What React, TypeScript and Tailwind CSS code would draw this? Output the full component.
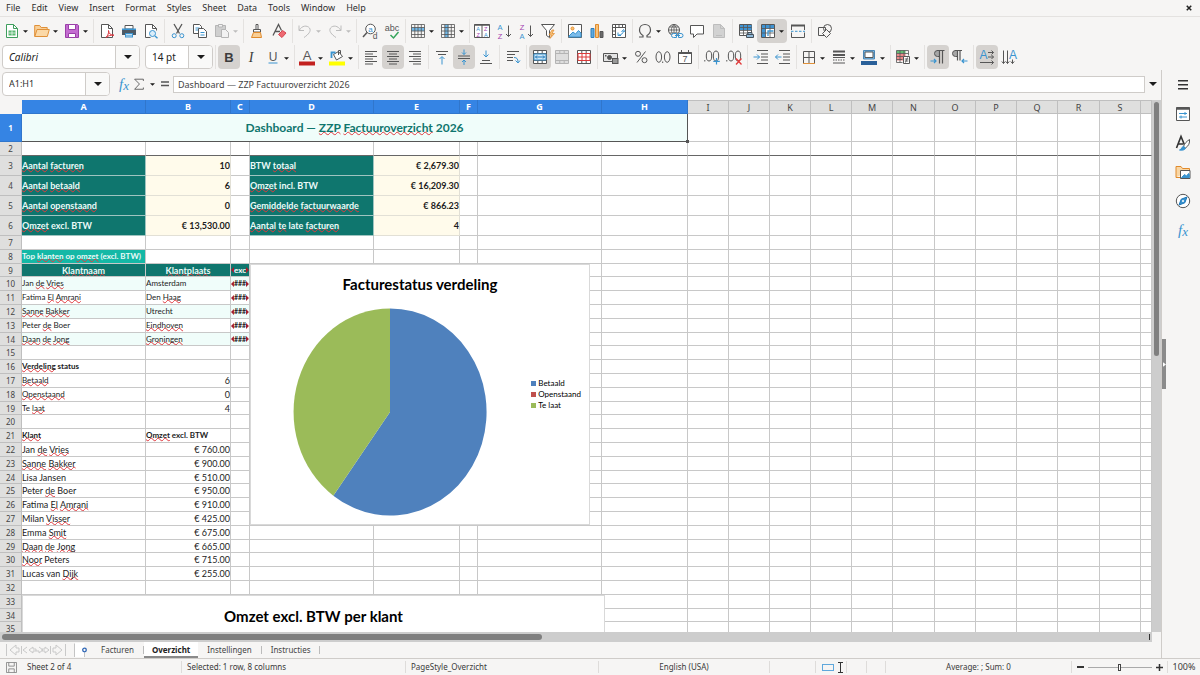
import React from "react";

const INK = "#565656";
const BLUE = "#3a94d0";

const Svg = ({ children, w = 16 }: { children: React.ReactNode; w?: number }) => (
  <svg viewBox="0 0 16 16" width={w} height={w} fill="none" stroke={INK} strokeWidth="1" aria-hidden="true" className="shrink-0 overflow-visible">
    {children}
  </svg>
);

const Letter = ({ x, y, s, fill = INK, bold, children }: { x: number; y: number; s: number; fill?: string; bold?: boolean; children: string }) => (
  <text x={x} y={y} fontSize={s} fill={fill} stroke="none" textAnchor="middle" fontFamily="Liberation Sans, sans-serif" fontWeight={bold ? 700 : 400}>
    {children}
  </text>
);

const Grid = ({ stroke = INK }: { stroke?: string }) => (
  <path stroke={stroke} d="M1.5 1.5h13v13h-13zM1.5 4.5h13M1.5 8h13M1.5 11.5h13M4.8 1.5v13M8 1.5v13M11.3 1.5v13" strokeWidth=".8" />
);

const icons: Record<string, React.ReactNode> = {
  new: (
    <>
      <path stroke="#3f9e5d" fill="#fff" d="M2.5 1.5h7l4 4v9h-11z" />
      <path stroke="#3f9e5d" d="M9.5 1.5v4h4" />
      <path stroke="none" fill="#5bb873" d="M4.5 7.5h7v5h-7z" />
      <path stroke="#fff" strokeWidth=".7" d="M4.5 10h7M8 7.5v5" />
    </>
  ),
  open: (
    <>
      <path stroke="#e09139" fill="#f9cf96" d="M.7 13.5V2.5h5l1.5 2h6v2.5" />
      <path stroke="#e09139" fill="#fbd9a8" d="M.8 13.5 3 6.5h12.3l-2 7z" />
    </>
  ),
  save: (
    <>
      <path stroke="#9a3fa8" fill="#c46cd1" d="M1.5 1.5h12l1 1v12h-13z" />
      <path stroke="#9a3fa8" fill="#fff" d="M4.5 1.5h7v5h-7zM4.5 10.5h7v4h-7z" />
    </>
  ),
  pdf: (
    <>
      <path fill="#fff" d="M2.5 1.5h7l4 4v9h-11z" />
      <path d="M9.5 1.5v4h4" />
      <path stroke="#d9363e" d="M7 14.5c2-2 3-5 2.5-7 .5 3.5 2 4.5 5.500 4.700-3-.2-6 .3-8 2.300z" />
    </>
  ),
  print: (
    <>
      <path stroke="none" fill="#4d5a66" d="M1 6h14v6H1z" />
      <path fill="#fff" d="M4 2.5h8V6H4z" />
      <path stroke="none" fill={BLUE} d="M1 5.5h14v1.5H1zM4 10h8v4.5H4z" />
      <path stroke="#fff" strokeWidth=".7" d="M5 11.5h6M5 13h6" />
    </>
  ),
  preview: (
    <>
      <path fill="#fff" d="M2.5 14.5v-13h7l4 4v2M2.5 14.5h5" />
      <path d="M9.5 1.5v4h4" />
      <circle cx="9.5" cy="10.5" r="3" stroke={BLUE} fill="#dceefa" />
      <path stroke={BLUE} strokeWidth="1.4" d="m12 13 2.5 2.3" />
    </>
  ),
  cut: (
    <>
      <path strokeWidth="1.3" d="m4 1 5.5 9.5M12 1 6.5 10.5" />
      <circle cx="4.2" cy="12.7" r="2" stroke={BLUE} />
      <circle cx="11.8" cy="12.7" r="2" stroke={BLUE} />
    </>
  ),
  copy: (
    <>
      <path fill="#fff" d="M1.5 1.5h6l2 2v7h-8z" />
      <path stroke={BLUE} d="M3.5 5h4M3.5 7h3" />
      <path fill="#fff" d="M6.5 5.5h5l3 3v6h-8z" />
      <path stroke={BLUE} d="M8.5 9.5h4M8.5 12h4" />
    </>
  ),
  paste: (
    <>
      <path stroke="#b5b5b5" fill="#cfcfcf" d="M1.5 2.5h10v11h-10z" />
      <path stroke="#b5b5b5" fill="#f2f2f2" d="M4.5 1.5h4v2.5h-4zM7.5 6.5h4l3 3v5h-7z" />
    </>
  ),
  brush: (
    <>
      <path fill="#fff" d="M7 1.5h2v5H7zM4.5 6.5h7v2.5h-7z" />
      <path stroke="#e08a2c" fill="#f9cf96" d="M4.5 9.5h7l1 5h-10z" />
    </>
  ),
  clear: (
    <>
      <path strokeWidth="1.3" d="M2 12.5 7.5 1.5l3 6M4 8.5h5" />
      <path stroke="#d64550" fill="#ee6a72" d="m7.5 11.5 4-4 3.5 2.5-4 4.5z" />
    </>
  ),
  undo: <path stroke="#bcbcbc" d="M2 2.5v5h5M2.3 7.2C5 2.5 10 2 12.5 5c2 3-1 6.5-5.5 9.5" />,
  redo: <path stroke="#bcbcbc" d="M14 2.5v5H9M13.7 7.2C11 2.5 6 2 3.5 5c-2 3 1 6.5 5.5 9.5" />,
  find: (
    <>
      <circle cx="8.5" cy="6" r="4.8" fill="#fff" />
      <path strokeWidth="1.5" d="m5 9.5-4 4.5" />
      <Letter x={8.5} y={8.5} s={8} fill={BLUE}>a</Letter>
      <Letter x={13} y={15.5} s={8.5}>d</Letter>
    </>
  ),
  spell: (
    <>
      <Letter x={8} y={8} s={9}>abc</Letter>
      <path stroke="#35a55b" strokeWidth="1.5" d="m6.500 12 3 3 5-6" />
    </>
  ),
  rows: (
    <>
      <path stroke="none" fill="#72b9e8" d="M1.5 4.5h13V8h-13z" />
      <Grid />
    </>
  ),
  cols: (
    <>
      <path stroke="none" fill="#72b9e8" d="M4.8 1.5H8.5v13H4.8z" />
      <Grid />
    </>
  ),
  sort: (
    <>
      <path fill="#fff" d="M.5 1.5h15v13H.5zM8 1.5v13" />
      <path strokeWidth="1.5" d="M.5 2h15" />
      <Letter x={4.2} y={7.8} s={5.5} fill={BLUE}>A</Letter>
      <Letter x={4.2} y={14} s={5.5} fill="#a33fb0">Z</Letter>
      <Letter x={11.8} y={7.8} s={5.5} fill="#a33fb0">Z</Letter>
      <Letter x={11.8} y={14} s={5.5} fill={BLUE}>A</Letter>
    </>
  ),
  asc: (
    <>
      <Letter x={4} y={7} s={7.5} fill={BLUE}>A</Letter>
      <Letter x={4} y={15.5} s={7.5} fill="#a33fb0">Z</Letter>
      <path d="M12.5 2.5v11M10 11l2.5 2.5L15 11" />
    </>
  ),
  desc: (
    <>
      <Letter x={4} y={7} s={7.5} fill="#a33fb0">Z</Letter>
      <Letter x={4} y={15.5} s={7.5} fill={BLUE}>A</Letter>
      <path d="M12.5 2.5v11M10 11l2.5 2.5L15 11" />
    </>
  ),
  filter: (
    <>
      <path fill="#fff" d="M1.5 1.5h13L9.5 7.500v7l-3-2v-5z" />
      <path stroke="#e08a2c" fill="#f7c27b" strokeWidth=".7" d="m12 7-3 5h2.5L10 15.500l4.5-5H12L14 7z" />
    </>
  ),
  image: (
    <>
      <path fill="#fff" d="M1.5 1.5h13v13h-13z" />
      <path stroke={BLUE} fill="#7cbcea" d="m2 13 4-4 2.5 2 3-3.5L14 10v4H2z" />
      <circle cx="5.5" cy="5.5" r="1.5" stroke="#e8912d" fill="#f7c27b" />
    </>
  ),
  chart: (
    <>
      <path stroke="#2f7fbd" fill="#5ea9dd" d="M2 5.5h3v9H2z" />
      <path stroke="#e08a2c" fill="#f7c27b" d="M6.5 1.5h3v13h-3z" />
      <path fill="#6b6b6b" d="M11 8.5h3v6h-3z" />
    </>
  ),
  pivot: (
    <>
      <path fill="#fff" d="M1.5 1.5h13v13h-13zM1.5 4.5h13M4.5 1.5v13M8 1.5v3M11.5 1.5v3M1.5 8h3M1.5 11.5h3" />
      <path stroke={BLUE} d="M7 9.5v3h3M7.5 12c3 0 4.5-1.5 5-4M10.5 9l2-2.5L14 9" />
    </>
  ),
  omega: <path strokeWidth="1.2" d="M2 14h4v-1.5C3.5 11 2.5 9 2.5 7c0-3.5 2.5-5.5 5.5-5.5s5.5 2 5.5 5.5c0 2-1 4-3.5 5.5V14h4" />,
  link: (
    <>
      <circle cx="7" cy="7" r="5.5" />
      <path strokeWidth=".8" d="M1.5 7h11M7 1.5v11M7 1.5c-3.5 3.5-3.5 7.5 0 11M7 1.5c3.5 3.5 3.5 7.500 0 11M2.5 4h9M2.5 10h9" />
      <path stroke={BLUE} fill="#f6f5f4" d="M6.500 10.500h3v4h-3a2 2 0 0 1 0-4zM11.500 10.500H14a2 2 0 0 1 0 4h-2.500zM8 12.500h5" />
    </>
  ),
  comment: <path fill="#fff" d="M1.5 2.5h13v8.5H8l-3.5 3.5V11h-3z" />,
  doc: (
    <>
      <path stroke="#bdbdbd" fill="#d2d2d2" d="M2.5 1.5h7l4 4v9h-11z" />
      <path stroke="#bdbdbd" d="M9.5 1.5v4h4M5 12.5h6" />
    </>
  ),
  printarea: (
    <>
      <path fill="#fff" d="M1.5 1.5h12v11h-12z" />
      <path stroke="none" fill="#3f93d2" d="M2 2h11.5v5H2z" />
      <path strokeWidth=".8" d="M1.5 4.5h12M1.5 7.5h12M1.5 10h12M5.5 1.5v11M9.5 1.5v11" />
      <path stroke="#47525c" fill="#8fb8d8" d="M8.5 11.5h7v3h-7zM10 9.5h4v2h-4z" />
    </>
  ),
  freeze: (
    <>
      <path fill="#fff" d="M1.5 1.5h13v13h-13z" />
      <path stroke="none" fill="#3f93d2" d="M2 2h3.5v12H2zM2 2h12v3.5H2z" />
      <path strokeWidth=".8" d="M5.5 1.5v13M10 1.5v13M1.5 5.5h13M1.5 10h13" />
      <path stroke={BLUE} strokeWidth="1.3" d="M8 13V8h5.5" />
    </>
  ),
  split: (
    <>
      <path strokeWidth="2" d="M1 2.5h14" />
      <path d="M1.5 2v5M14.5 2v5M1.5 9.5v5h13v-5" />
      <path stroke={BLUE} strokeDasharray="2.5 1.5" d="M1 8.3h14" />
    </>
  ),
  shapes: (
    <>
      <path d="M1.5 4.5h7v8h-7z" />
      <circle cx="10.5" cy="5.5" r="4" />
      <path fill="#f6f5f4" d="m9.5 6.5 4 4-4 4-4-4z" />
    </>
  ),
  bold: <Letter x={8} y={12.5} s={13} fill="#3c3c3c" bold>B</Letter>,
  italic: (
    <text x="8" y="12.5" fontSize="14" fill="#3c3c3c" stroke="none" textAnchor="middle" fontStyle="italic" fontFamily="Liberation Serif, serif">I</text>
  ),
  underline: (
    <>
      <Letter x={8} y={11.5} s={12}>U</Letter>
      <path stroke={BLUE} d="M3.5 14h9" />
    </>
  ),
  fontcolor: (
    <>
      <Letter x={8} y={10.8} s={13}>A</Letter>
      <path stroke="none" fill="#c3211f" d="M0 12.5h16v4H0z" />
    </>
  ),
  fill: (
    <>
      <path fill="#fff" d="m4.5 5.5 5-3 4 5-6 3.5z" />
      <path stroke={BLUE} strokeWidth="1.8" d="M2.5 9V3.5h4" />
      <path d="M11.5 5V1.5h-2V6" />
      <path stroke="none" fill="#ffff00" d="M0 12.5h16v4H0z" />
    </>
  ),
  left: <path d="M2 2.5h12M2 5h8M2 7.5h12M2 10h8M2 12.5h12M2 15h8" />,
  center: <path d="M2 2.5h12M4 5h8M2 7.5h12M4 10h8M2 12.5h12M4 15h8" />,
  right: <path d="M2 2.5h12M6 5h8M2 7.5h12M6 10h8M2 12.5h12M6 15h8" />,
  top: (
    <>
      <path d="M2 2.5h12M4 5.5h8" />
      <path stroke={BLUE} d="M8 15.5V8M5.5 10 8 7.5l2.5 2.5" />
    </>
  ),
  middle: (
    <>
      <path d="M2 7h12M2 9.5h12" />
      <path stroke={BLUE} d="M8 .5v5M6 3.5l2 2 2-2M8 16v-5M6 13l2-2 2 2" />
    </>
  ),
  bottom: (
    <>
      <path d="M4 11.5h8M2 14.5h12" />
      <path stroke={BLUE} d="M8 1.5v6M5.5 5.5 8 8l2.5-2.5" />
    </>
  ),
  wrap: (
    <>
      <path d="M2 2.5h12M2 5.5h8M2 8.5h6M2 11.5h6" />
      <path stroke={BLUE} d="M9 8.5c3 0 4 1.5 4 4.5M10.5 11.5l2.5 2.5 2-2.5" />
    </>
  ),
  merge: (
    <>
      <path fill="#fff" d="M1.5 1.5h13v13h-13zM1.5 4.5h13M1.5 11.5h13M5.8 1.5v3M10.2 1.5v3M5.8 11.5v3M10.2 11.5v3" />
      <path stroke={BLUE} fill="#cfe8f8" d="M2 5h12v6H2z" />
      <path stroke="#1d76b8" d="M3.5 8h9M5 6.5 3.5 8 5 9.5M11 6.5 12.5 8 11 9.5" />
    </>
  ),
  mergecells: (
    <path stroke="#b4b4b4" fill="#dedede" d="M1.5 1.5h13v13h-13zM1.5 4.5h13M1.5 11.5h13M5.8 1.5v3M10.2 1.5v3M5.8 11.5v3M10.2 11.5v3" />
  ),
  unmerge: (
    <>
      <path fill="#fff" d="M1.5 1.5h13v13h-13zM1.5 4.5h13M1.5 11.5h13M5.8 1.5v3M10.2 1.5v3M5.8 11.5v3M10.2 11.5v3" />
      <path stroke="#dc3b3b" d="M2 4.5h12v7H2zM6 4.5v7M10 4.5v7M2 8h12" />
    </>
  ),
  currency: (
    <>
      <path fill="#e4e4e4" d="M.5 4.5h14v8H.5z" />
      <circle cx="6.5" cy="8.5" r="2" fill={INK} />
      <path stroke="none" fill={INK} d="M9 9h6.5v6H9zM2 6h1.5v1.5H2z" />
      <path stroke="#fff" strokeWidth=".8" d="M10 11h4.5M10 13h4.5" />
    </>
  ),
  percent: (
    <>
      <circle cx="5" cy="4.800" r="2.500" />
      <circle cx="11.500" cy="11.200" r="2.500" />
      <path d="M12.500 2.500 4 13.500" />
    </>
  ),
  number: (
    <>
      <ellipse cx="3.8" cy="8" rx="2.8" ry="5.3" />
      <ellipse cx="12.2" cy="8" rx="2.8" ry="5.3" />
      <path d="M7.7 12.5v1.5" />
    </>
  ),
  date: (
    <>
      <path fill="#fff" d="M1.5 3.5h13v11h-13z" />
      <path strokeWidth="2" d="M1.5 4h13" />
      <path d="M4.5 1v3M11.5 1v3" />
      <Letter x={8} y={13.3} s={9}>7</Letter>
    </>
  ),
  adddec: (
    <>
      <ellipse cx="5" cy="7" rx="2.7" ry="5" />
      <ellipse cx="12" cy="7" rx="2.7" ry="5" />
      <path d="M.8 11v1.5" />
      <path stroke={BLUE} strokeWidth="1.2" d="M12.5 9v6.5M9.3 12.3h6.5" />
    </>
  ),
  deldec: (
    <>
      <ellipse cx="5" cy="7" rx="2.7" ry="5" />
      <ellipse cx="12" cy="7" rx="2.7" ry="5" />
      <path d="M.8 11v1.5" />
      <path stroke="#e23b3b" strokeWidth="1.3" d="m10 9.5 5.5 6M15.500 9.5l-5.5 6" />
    </>
  ),
  indent: (
    <>
      <path d="M4 1.5h11M8 5h7M8 8h7M8 11h7M4 14.5h11" />
      <path stroke={BLUE} d="M.5 8h6M4 5.5 6.5 8 4 10.5" />
    </>
  ),
  outdent: (
    <>
      <path d="M4 1.5h11M8 5h7M8 8h7M8 11h7M4 14.5h11" />
      <path stroke={BLUE} d="M.5 8h6M3 5.5.5 8 3 10.5" />
    </>
  ),
  borders: (
    <>
      <path d="M2.5 14V2.5h11V14M8 2.5v12M2.5 8.5h11" />
      <path stroke="#e09139" d="M2 14.5h12" />
    </>
  ),
  linestyle: (
    <>
      <path strokeWidth="2" d="M2 2.5h12M2 6h12" />
      <path d="M2 8.5h12" />
      <path strokeDasharray="1.5 1" d="M2 11h12" />
      <path d="M2 14h12" />
    </>
  ),
  linecolor: (
    <>
      <path fill="#7cbcea" stroke="#4a86b5" d="M2.5 1.5h11v8.5h-11z" />
      <path stroke={INK} fill="#fff" d="M4 3h8v5.500H4z" />
      <path stroke="none" fill="#2a6099" d="M0 12h16v4H0z" />
    </>
  ),
  condfmt: (
    <>
      <path stroke="none" fill="#63bd75" d="M1.5 1.5h9v3h-9z" />
      <path stroke="none" fill="#ee8a8a" d="M1.5 4.5h9v7h-9z" />
      <path strokeWidth=".8" d="M1.5 1.5h12v5M1.5 1.5v12h6M1.5 4.5h12M1.5 7.5h7M1.5 10.5h6M5 1.5v12M9 1.5v6" />
      <path fill="#fff" d="M8.5 7.5h6v7h-6z" />
      <path strokeWidth=".9" d="M9.8 10h3.5M9.8 12h3.5M12.5 8.5l-2 5" />
    </>
  ),
  ltr: (
    <>
      <path fill="#a6a6a6" d="M9.5 1.5H7.5a3 3 0 0 0 0 6h2" />
      <path strokeWidth="1.2" d="M9.5 14.5v-13M12.5 14.5v-13M7 1.5h7.5" />
      <path stroke={BLUE} strokeWidth="1.2" d="M.5 12H6M4 10l2 2-2 2" />
    </>
  ),
  rtl: (
    <>
      <path fill="#a6a6a6" d="M5.5 1.5h-2a3 3 0 0 0 0 6h2" />
      <path strokeWidth="1.2" d="M5.5 11.5v-10M8 11.5v-10M3 1.5h7" />
      <path stroke={BLUE} strokeWidth="1.2" d="M15.5 12H10M12 10l-2 2 2 2" />
    </>
  ),
  horiz: (
    <>
      <Letter x={4.5} y={9.5} s={12} fill={BLUE}>A</Letter>
      <path d="M9 3.5h5.5M9 8h5.5M1 13.5h13.5M12.5 1.5l2 2-2 2M12.5 6l2 2-2 2M12.5 11.5l2 2-2 2" />
    </>
  ),
  vert: (
    <>
      <path d="M2.5 1.5v13M6.5 1.5v13M11.5 10.5v4M.8 12.5l1.7 2 1.7-2M4.8 12.5l1.7 2 1.7-2M9.8 12.5l1.7 2 1.7-2" />
      <Letter x={12} y={9.5} s={12} fill={BLUE}>A</Letter>
    </>
  ),
  fx: (
    <text x="8" y="13" fontSize="15" fill={BLUE} stroke="none" textAnchor="middle" fontStyle="italic" fontFamily="Liberation Serif, serif">
      f<tspan dy="1" fontSize="13">x</tspan>
    </text>
  ),
  sum: <path d="M13 4.5V2.5H3L8.5 8 3 14h10v-2" />,
  equals: <path strokeWidth="1.6" d="M4 6h8M4 9.5h8" />,
  menu: <path stroke="#333" strokeWidth="1.4" d="M3 3.8h10M3 7.8h10M3 11.8h10" />,
  properties: (
    <>
      <path fill="#fff" d="M1.5 1.5h13v13h-13z" />
      <path strokeWidth="2.5" d="M1.5 2.5h13" />
      <path stroke={BLUE} d="M4 7.5h8M4 11h8M10 6v3M6 9.5v3" />
    </>
  ),
  styles: (
    <>
      <path stroke="#333" strokeWidth="1.6" d="M1.5 13 6 1.5 9.5 10M3 9h5" />
      <path d="M14.5 4.5c-3 2-5 4-6 7l2 1.5c3-2 4.5-5 4-8.5z" fill="#fff" />
      <path stroke={BLUE} fill={BLUE} d="M8.5 11.5c-2 0-1 2.5-4 3.5 3 .5 5.500 0 6-2z" />
    </>
  ),
  gallery: (
    <>
      <path stroke="#e08a2c" fill="#f9d6a4" d="M1 13.5v-11h5l1.5 2h7v2M1 13.5h4" />
      <path fill="#fff" stroke={INK} d="M5.5 6.5h9.5v8H5.5z" />
      <path stroke={BLUE} fill={BLUE} d="m6.5 13.5 3-3 2 1.5 2-2.5.8 1v3z" />
    </>
  ),
  navigator: (
    <>
      <circle cx="8" cy="8" r="6.7" fill="#fff" />
      <path stroke="#1d76b8" fill={BLUE} d="m12 4-2.2 5.800L4 12l2.200-5.800z" />
      <circle cx="8" cy="8" r="1" fill="#fff" stroke="none" />
    </>
  ),
};

type Tool = { i: string; l: string; a?: boolean; on?: boolean; off?: boolean } | "|" | "!";

const standard: Tool[] = [
  { i: "new", l: "New", a: true }, { i: "open", l: "Open", a: true }, { i: "save", l: "Save", a: true }, "|",
  { i: "pdf", l: "Export as PDF" }, { i: "print", l: "Print" }, { i: "preview", l: "Print preview" }, "|",
  { i: "cut", l: "Cut" }, { i: "copy", l: "Copy" }, { i: "paste", l: "Paste", a: true, off: true }, "|",
  { i: "brush", l: "Clone formatting" }, { i: "clear", l: "Clear formatting" }, "!",
  { i: "undo", l: "Undo", a: true, off: true }, { i: "redo", l: "Redo", a: true, off: true }, "|",
  { i: "find", l: "Find and replace" }, { i: "spell", l: "Spelling" }, "!",
  { i: "rows", l: "Row", a: true }, { i: "cols", l: "Column", a: true }, "!",
  { i: "sort", l: "Sort" }, { i: "asc", l: "Sort ascending" }, { i: "desc", l: "Sort descending" }, { i: "filter", l: "AutoFilter" }, "|",
  { i: "image", l: "Insert image" }, { i: "chart", l: "Insert chart" }, { i: "pivot", l: "Insert pivot table" }, "!",
  { i: "omega", l: "Special character", a: true }, { i: "link", l: "Hyperlink" }, { i: "comment", l: "Comment" }, { i: "doc", l: "Headers and footers", off: true }, "|",
  { i: "printarea", l: "Print area" }, { i: "freeze", l: "Freeze rows and columns", a: true, on: true }, { i: "split", l: "Split window" }, "|",
  { i: "shapes", l: "Draw functions" },
];

const formatting: Tool[] = [
  "|", { i: "bold", l: "Bold", on: true }, { i: "italic", l: "Italic" }, { i: "underline", l: "Underline", a: true }, "!",
  { i: "fontcolor", l: "Font color", a: true }, { i: "fill", l: "Background color", a: true }, "!",
  { i: "left", l: "Align left" }, { i: "center", l: "Center horizontally", on: true }, { i: "right", l: "Align right" }, "|",
  { i: "top", l: "Align top" }, { i: "middle", l: "Center vertically", on: true }, { i: "bottom", l: "Align bottom" }, "|",
  { i: "wrap", l: "Wrap text" }, "|",
  { i: "merge", l: "Merge and center", on: true }, { i: "mergecells", l: "Merge cells", off: true }, { i: "unmerge", l: "Unmerge cells" }, "|",
  { i: "currency", l: "Currency", a: true }, { i: "percent", l: "Percent" }, { i: "number", l: "Number" }, { i: "date", l: "Date" }, "|",
  { i: "adddec", l: "Add decimal place" }, { i: "deldec", l: "Delete decimal place" }, "|",
  { i: "indent", l: "Increase indent" }, { i: "outdent", l: "Decrease indent" }, "!",
  { i: "borders", l: "Borders", a: true }, { i: "linestyle", l: "Border style", a: true }, { i: "linecolor", l: "Border color", a: true }, "!",
  { i: "condfmt", l: "Conditional formatting", a: true }, "|",
  { i: "ltr", l: "Left to right", on: true }, { i: "rtl", l: "Right to left" }, "|",
  { i: "horiz", l: "Text direction horizontal", on: true }, { i: "vert", l: "Text direction vertical" },
];

const Caret = ({ off, big }: { off?: boolean; big?: boolean }) => (
  <svg viewBox="0 0 8 4" width={big ? 8 : 5} height={big ? 4 : 3} aria-hidden="true">
    <path d="M0 0h8L4 4z" fill={off ? "#bdbdbd" : "#1c1c1c"} />
  </svg>
);

const Tools = ({ items }: { items: Tool[] }) => (
  <>
    {items.map((t, k) =>
      typeof t === "string" ? (
        <span key={k} className={`flex h-6 shrink-0 justify-center ${t === "|" ? "w-[5px]" : "w-1"}`}>
          <span className="w-px bg-[#e4e2e0]" />
        </span>
      ) : (
        <button
          key={k}
          type="button"
          aria-label={t.l}
          aria-pressed={t.on}
          disabled={t.off}
          className={`flex h-6 shrink-0 items-center rounded ${t.on ? "bg-[#d5d2cf]" : ""}`}
        >
          <span className="flex w-[22px] justify-center">
            <Svg>{icons[t.i]}</Svg>
          </span>
          {t.a && (
            <span className="w-2 pt-0.5">
              <Caret off={t.off} />
            </span>
          )}
        </button>
      )
    )}
  </>
);

const Combo = ({ label, value, width, italic }: { label: string; value: string; width: string; italic?: boolean }) => (
  <div className={`grid h-6 shrink-0 grid-cols-[1fr_24px] overflow-hidden rounded border border-[#cfccc9] bg-white ${width}`}>
    <select
      aria-label={label}
      defaultValue={value}
      className={`col-span-2 col-start-1 row-start-1 appearance-none bg-transparent pl-1.5 text-[10px] text-[#222] outline-none ${italic ? "italic" : ""}`}
    >
      <option>{value}</option>
    </select>
    <span className="pointer-events-none col-start-2 row-start-1 flex items-center justify-center border-l border-[#cfccc9] bg-[#f9f9f8]">
      <Caret big />
    </span>
  </div>
);

const Spell = ({ text }: { text: string }) => (
  <>
    {text.split("~").map((part, i) =>
      i % 2 ? (
        <span key={i} className="underline decoration-[#e0393e] decoration-wavy decoration-1 -underline-offset-1 [text-decoration-skip-ink:none]">{part}</span>
      ) : (
        part
      )
    )}
  </>
);

type Cell = [text: string, className: string];
type RowData = Record<string, Cell>;

const key = "bg-[#0f766e] text-[#eafaf8] font-bold text-[9px] border-[#9fc4c0]";
const val = "bg-[#fffbeb] text-right font-bold text-[9px] border-[#e2e0d6]";
const head = "bg-[#0f766e] text-[#eafaf8] font-bold text-[9px] text-center";
const over = ["◂###▸", "over"] as Cell;

const rows: Record<number, RowData> = {
  3: { A: ["~Aantal~ ~facturen~", key], B: ["10", val], D: ["BTW ~totaal~", key], E: ["€ 2,679.30", val] },
  4: { A: ["~Aantal~ ~betaald~", key], B: ["6", val], D: ["~Omzet~ incl. BTW", key], E: ["€ 16,209.30", val] },
  5: { A: ["~Aantal~ ~openstaand~", key], B: ["0", val], D: ["~Gemiddelde~ ~factuurwaarde~", key], E: ["€ 866.23", val] },
  6: { A: ["~Omzet~ excl. BTW", key], B: ["€ 13,530.00", val], D: ["~Aantal~ ~te~ late ~facturen~", key], E: ["4", val] },
  8: { A: ["Top ~klanten~ op ~omzet~ (excl. BTW)", "bg-[#14b8a6] text-[#eafaf8] font-bold text-[8px]"] },
  9: { A: ["~Klantnaam~", head], B: ["~Klantplaats~", head], C: ["◂exc▸", "head"] },
  16: { A: ["~Verdeling~ status", "font-bold text-[8px]"] },
  17: { A: ["~Betaald~", "text-[8px]"], B: ["6", "text-right text-[9px]"] },
  18: { A: ["~Openstaand~", "text-[8px]"], B: ["0", "text-right text-[9px]"] },
  19: { A: ["Te ~laat~", "text-[8px]"], B: ["4", "text-right text-[9px]"] },
  21: { A: ["~Klant~", "font-bold text-[8px]"], B: ["~Omzet~ excl. BTW", "font-bold text-[8px]"] },
};

const top: [string, string][] = [
  ["Jan ~de~ ~Vries~", "Amsterdam"],
  ["Fatima ~El~ ~Amrani~", "Den ~Haag~"],
  ["~Sanne~ ~Bakker~", "Utrecht"],
  ["Peter ~de~ Boer", "~Eindhoven~"],
  ["~Daan~ ~de~ ~Jong~", "~Groningen~"],
];
top.forEach(([name, city], i) => {
  const tint = i % 2 ? "" : "bg-[#f0fdfa]";
  rows[10 + i] = { A: [name, `text-[8px] ${tint}`], B: [city, `text-[8px] ${tint}`], C: over };
});

const revenue: [string, string][] = [
  ["Jan ~de~ ~Vries~", "760"], ["~Sanne~ ~Bakker~", "900"], ["Lisa Jansen", "510"], ["Peter ~de~ Boer", "950"],
  ["Fatima ~El~ ~Amrani~", "910"], ["Milan ~Visser~", "425"], ["Emma ~Smit~", "675"], ["~Daan~ ~de~ ~Jong~", "665"],
  ["~Noor~ Peters", "715"], ["Lucas van ~Dijk~", "255"],
];
revenue.forEach(([name, amount], i) => {
  rows[22 + i] = { A: [name, "text-[9px]"], B: [`€ ${amount}.00`, "text-right text-[9px]"] };
});

const cols: [string, string][] = [
  ["A", "w-[124px]"], ["B", "w-[85px]"], ["C", "w-[19px]"], ["D", "w-[124px]"], ["E", "w-[86px]"], ["F", "w-[18px]"],
  ["G", "w-[124px]"], ["H", "w-[86px]"], ["I", "w-[41px]"], ["J", "w-[41px]"], ["K", "w-[41px]"], ["L", "w-[41px]"],
  ["M", "w-[41px]"], ["N", "w-[42px]"], ["O", "w-[41px]"], ["P", "w-[41px]"], ["Q", "w-[41px]"], ["R", "w-[42px]"],
  ["S", "w-[41px]"], ["", "w-auto"],
];

const rowHeight = (n: number) =>
  n === 1 ? "h-7" : n >= 3 && n <= 6 ? "h-5" : n > 6 && (n - 7) % 5 === 2 ? "h-[13px]" : "h-3.5";

const Overflow = ({ text }: { text: string }) => (
  <span className="flex items-center justify-center">
    <svg viewBox="0 0 3 6" width="3" height="6" aria-hidden="true"><path d="M3 0v6L0 3z" fill="#a51d2d" /></svg>
    <span>{text.slice(1, -1)}</span>
    <svg viewBox="0 0 3 6" width="3" height="6" aria-hidden="true"><path d="M0 0v6l3-3z" fill="#a51d2d" /></svg>
  </span>
);

const Sheet = () => (
  <table className="w-full table-fixed border-separate border-spacing-0 whitespace-nowrap bg-white font-['Lato',sans-serif] leading-[11px] text-[#1c1c1c]">
    <colgroup>
      <col className="w-[22px]" />
      {cols.map(([, w], i) => <col key={i} className={w} />)}
    </colgroup>
    <thead>
      <tr className="h-3.5 font-['Noto_Sans',sans-serif] text-[9px]">
        <td className="bg-[#f6f5f4] p-0" />
        {cols.map(([c], i) => (
          <th
            key={i}
            scope="col"
            className={`border-r border-b p-0 ${i < 8 ? "border-[#3076cc] bg-[#3584e4] font-bold text-white" : "border-[#bfbfbf] border-t bg-[#dfdfde] font-normal text-[#444]"}`}
          >
            {c}
          </th>
        ))}
      </tr>
    </thead>
    <tbody>
      {Array.from({ length: 35 }, (_, k) => k + 1).map((n) => (
        <tr key={n} className={rowHeight(n)}>
          <th
            scope="row"
            className={`border-r border-b p-0 text-center font-['Noto_Sans',sans-serif] text-[8px] ${n === 1 ? "border-[#3076cc] bg-[#3584e4] font-bold text-white" : "border-[#bfbfbf] bg-[#dfdfde] font-normal text-[#444]"}`}
          >
            {n}
          </th>
          {n === 1 && (
            <td colSpan={8} className="border-r border-b border-[#555] bg-[#f0fdfa] p-0 text-center text-xs font-bold text-[#0f766e]">
              Dashboard — <Spell text="~ZZP~ ~Factuuroverzicht~" /> 2026
            </td>
          )}
          {cols.map(([c], i) => {
            if (n === 1 && i < 8) return null;
            const cell = rows[n]?.[c];
            const edge = n === 2 ? "border-r-[#c8c8c8] border-b-[#666]" : "border-[#c8c8c8]";
            if (cell && c === "C") {
              const style = cell[1] === "head" ? "bg-[#0f766e] text-white text-[8px]" : n % 2 ? "text-[7px]" : "bg-[#f0fdfa] text-[7px]";
              return (
                <td key={i} className={`overflow-hidden border-r border-b border-[#c8c8c8] p-0 font-bold ${style}`}>
                  <Overflow text={cell[0]} />
                </td>
              );
            }
            return (
              <td key={i} className={`overflow-hidden border-r border-b p-0 ${cell && cell[1].includes("border-[") ? "" : edge} ${cell ? cell[1] : ""}`}>
                {cell && <Spell text={cell[0]} />}
              </td>
            );
          })}
        </tr>
      ))}
    </tbody>
  </table>
);

const legend: [string, string][] = [
  ["Betaald", "bg-[#4f81bd]"],
  ["Openstaand", "bg-[#c0504d]"],
  ["Te laat", "bg-[#9bbb59]"],
];

const PieChart = () => (
  <figure className="absolute top-[164px] left-[250px] flex h-[261px] w-[340px] flex-col border border-[#d9d9d9] bg-white font-['Lato',sans-serif] text-black">
    <figcaption className="pt-[9px] text-center text-[15px] leading-5 font-bold">Facturestatus verdeling</figcaption>
    <div className="flex items-center justify-between pt-3.5 pr-2 pl-[42px]">
      <svg viewBox="0 0 194 208" width="194" height="208" role="img" aria-label="Facturestatus verdeling">
        <path d="M97 104V.5A96.5 103.5 0 1 1 40.3 187.7z" fill="#4f81bd" />
        <path d="M97 104 40.3 187.7A96.5 103.5 0 0 1 97 .5z" fill="#9bbb59" />
      </svg>
      <ul className="-mt-9 text-[8px] leading-[11px]">
        {legend.map(([t, c]) => (
          <li key={t} className="flex items-center gap-0.5">
            <span className={`size-[5px] ${c}`} />
            {t}
          </li>
        ))}
      </ul>
    </div>
  </figure>
);

const Divider = () => <span className="my-0.5 w-px shrink-0 bg-[#dedcda]" />;

export default function App() {
  return (
    <div className="flex h-screen flex-col overflow-hidden bg-[#f6f5f4] font-['Noto_Sans',sans-serif] text-[9px] text-[#2e2e2e]">
      <header className="flex h-[17px] shrink-0 items-center border-b border-[#e4e2e0]">
        <nav className="flex flex-1 gap-[11px] pl-1.5 text-[9px]">
          {["File", "Edit", "View", "Insert", "Format", "Styles", "Sheet", "Data", "Tools", "Window", "Help"].map((m) => (
            <button key={m} type="button">{m}</button>
          ))}
        </nav>
        <button type="button" aria-label="Close document" className="mr-2">
          <svg viewBox="0 0 8 8" width="6" height="6" stroke="#222" strokeWidth="2"><path d="m1 1 6 6M7 1 1 7" /></svg>
        </button>
      </header>

      <div role="toolbar" aria-label="Standard" className="flex h-[27px] shrink-0 items-center pl-px">
        <Tools items={standard} />
      </div>
      <div role="toolbar" aria-label="Formatting" className="flex h-[26px] shrink-0 items-center pl-0.5">
        <Combo label="Font name" value="Calibri" width="mr-[5px] w-[138px]" italic />
        <Combo label="Font size" value="14 pt" width="w-[68px]" />
        <Tools items={formatting} />
      </div>

      <div className="flex min-h-0 flex-1">
        <main className="flex min-w-0 flex-1 flex-col border-r border-[#cfccc9]">
          <div className="flex h-[30px] shrink-0 items-center pb-0.5 pl-0.5">
            <div className="flex h-6 w-[108px] shrink-0 overflow-hidden rounded border border-[#cfccc9] bg-white">
              <input aria-label="Name box" defaultValue="A1:H1" className="w-0 flex-1 pl-1.5 text-[9px] outline-none" />
              <button type="button" aria-label="Named ranges" className="flex w-6 items-center justify-center border-l border-[#cfccc9] bg-[#f9f9f8]">
                <Caret big />
              </button>
            </div>
            <button type="button" aria-label="Function wizard" className="ml-1.5"><Svg>{icons.fx}</Svg></button>
            <button type="button" aria-label="Select function" className="flex items-center gap-1">
              <Svg w={14}>{icons.sum}</Svg>
              <Caret />
            </button>
            <button type="button" aria-label="Formula" className="ml-0.5"><Svg>{icons.equals}</Svg></button>
            <input
              aria-label="Input line"
              defaultValue="Dashboard — ZZP Factuuroverzicht 2026"
              className="h-[17px] min-w-0 flex-1 border border-[#cfccc9] bg-white pl-1 text-[9px] text-[#444] outline-none"
            />
            <button type="button" aria-label="Expand formula bar" className="flex w-4 shrink-0 items-center justify-center">
              <Caret big />
            </button>
          </div>

          <div className="flex min-h-0 flex-1">
            <div className="relative min-w-0 flex-1 overflow-hidden">
              <Sheet />
              <span className="absolute top-[40px] left-[686px] size-[3px] bg-[#555]" />
              <PieChart />
              <figure className="absolute top-[495px] left-[22px] h-[260px] w-[583px] border border-[#d9d9d9] bg-white text-center font-['Lato',sans-serif] text-[15px] leading-5 font-bold text-black">
                <figcaption className="pt-2.5">Omzet excl. BTW per klant</figcaption>
              </figure>
            </div>
            <div className="w-[9px] shrink-0 bg-[#cdcdcd] px-0.5 pt-0.5">
              <div className="h-[48%] rounded-full bg-[#7f7f7f]" />
            </div>
          </div>
          <div className="mr-[9px] flex h-2.5 shrink-0 items-center justify-between bg-[#cdcdcd] pr-0.5 pl-0.5">
            <div className="h-1.5 w-[47%] rounded-full bg-[#7f7f7f]" />
            <div className="h-1.5 w-px bg-[#333]" />
          </div>

          <div className="flex h-4 shrink-0 items-stretch text-[8px] text-[#444]">
            <div className="flex w-[74px] shrink-0 items-center pl-[5px]">
              <svg viewBox="0 0 62 12" width="62" height="12" fill="none" stroke="#c9c9c9" aria-hidden="true">
                <path d="M1.5 0v12M11 1 5 6l6 5V8h3V4h-3zM16.5 2v8M22 3l-4 3 4 3M28 3l-4 3 4 3V7h3V5h-3zM34 3l4 3-4 3V7h-3M40 3l4 3-4 3V7h-3V5h3zM45.5 2v8M51 1l6 5-6 5V8h-3V4h3zM60.5 0v12" />
              </svg>
            </div>
            <button type="button" aria-label="Add sheet" className="flex w-[18px] shrink-0 items-center">
              <svg viewBox="0 0 14 14" width="14" height="14" fill="#fff" stroke="#c4c4c4">
                <path stroke="none" d="M.5 0h10v14H.5z" />
                <path d="M.5 14V.5M10.500 9.500v4.500" />
                <circle cx="10.500" cy="7" r="1.800" stroke="#2f66b5" fill="none" strokeWidth="1.300" />
              </svg>
            </button>
            <div role="tablist" className="flex">
              {["Facturen", "Overzicht", "Instellingen", "Instructies"].map((t) => (
                <button
                  key={t}
                  type="button"
                  role="tab"
                  aria-selected={t === "Overzicht"}
                  className={`flex items-center ${t === "Overzicht" ? "border-b-2 border-[#8a8a8a] bg-white px-2 pt-0.5 font-bold text-[#222]" : "pl-[9px]"}`}
                >
                  {t}
                  {t !== "Overzicht" && <span className="ml-[9px] h-2 w-px bg-[#bbb]" />}
                </button>
              ))}
            </div>
          </div>
        </main>

        <aside className="flex w-[38px] shrink-0">
          <button type="button" aria-label="Hide sidebar" className="mt-[269px] flex h-[50px] w-1 shrink-0 items-center justify-center bg-[#8b8b8b]">
            <svg viewBox="0 0 4 6" width="3" height="5" aria-hidden="true"><path d="m0 0 4 3-4 3z" fill="#fff" /></svg>
          </button>
          <nav aria-label="Sidebar" className="flex flex-1 flex-col items-center gap-[13px] pt-[7px]">
            {[["menu", "Sidebar settings"], ["properties", "Properties"], ["styles", "Styles"], ["gallery", "Gallery"], ["navigator", "Navigator"], ["fx", "Functions"]].map(([i, l]) => (
              <button key={i} type="button" aria-label={l}><Svg>{icons[i]}</Svg></button>
            ))}
          </nav>
        </aside>
      </div>

      <footer className="flex h-[17px] shrink-0 items-stretch border-t border-[#cfccc9] text-[8px] leading-4 text-[#3a3a3a]">
        <div className="flex w-[181px] items-center gap-2.5 pl-1.5">
          <svg viewBox="0 0 12 12" width="11" height="11" fill="none" stroke="#8a8a8a" aria-hidden="true">
            <path d="M.5.5h11v11H.5zM3 .5v4h6v-4M3 11.5v-4h6v4" />
          </svg>
          Sheet 2 of 4
        </div>
        <Divider />
        <div className="w-[223px] pl-[5px]">Selected: 1 row, 8 columns</div>
        <Divider />
        <div className="w-[192px] pl-[5px]">PageStyle_Overzicht</div>
        <Divider />
        <div className="w-[170px] text-center">English (USA)</div>
        <Divider />
        <div className="w-[45px]" />
        <Divider />
        <div className="flex w-[30px] items-center gap-1 pl-1.5">
          <span className="h-[7px] w-3 border border-[#5fa8dc]" />
          <svg viewBox="0 0 5 11" width="5" height="11" stroke="#333" fill="none" aria-hidden="true"><path d="M0 .5h5M2.5 0v11M0 10.5h5" /></svg>
        </div>
        <Divider />
        <div className="w-[19px]" />
        <Divider />
        <div className="w-[18px]" />
        <Divider />
        <div className="flex-1 text-center">Average: ; Sum: 0</div>
        <Divider />
        <div className="flex w-[95px] items-center justify-center gap-1">
          <button type="button" aria-label="Zoom out" className="h-0.5 w-[7px] bg-[#333]" />
          <input
            type="range"
            aria-label="Zoom"
            defaultValue={50}
            className="h-[9px] w-16 appearance-none bg-transparent [&::-webkit-slider-runnable-track]:h-px [&::-webkit-slider-runnable-track]:bg-[#aaa] [&::-webkit-slider-thumb]:-mt-[3px] [&::-webkit-slider-thumb]:h-[7px] [&::-webkit-slider-thumb]:w-[3px] [&::-webkit-slider-thumb]:appearance-none [&::-webkit-slider-thumb]:border [&::-webkit-slider-thumb]:border-[#444] [&::-webkit-slider-thumb]:bg-white"
          />
          <button type="button" aria-label="Zoom in">
            <svg viewBox="0 0 7 7" width="7" height="7" stroke="#333" strokeWidth="1.5"><path d="M0 3.5h7M3.5 0v7" /></svg>
          </button>
        </div>
        <Divider />
        <div className="w-8 text-center text-[9px]">100%</div>
      </footer>
    </div>
  );
}
